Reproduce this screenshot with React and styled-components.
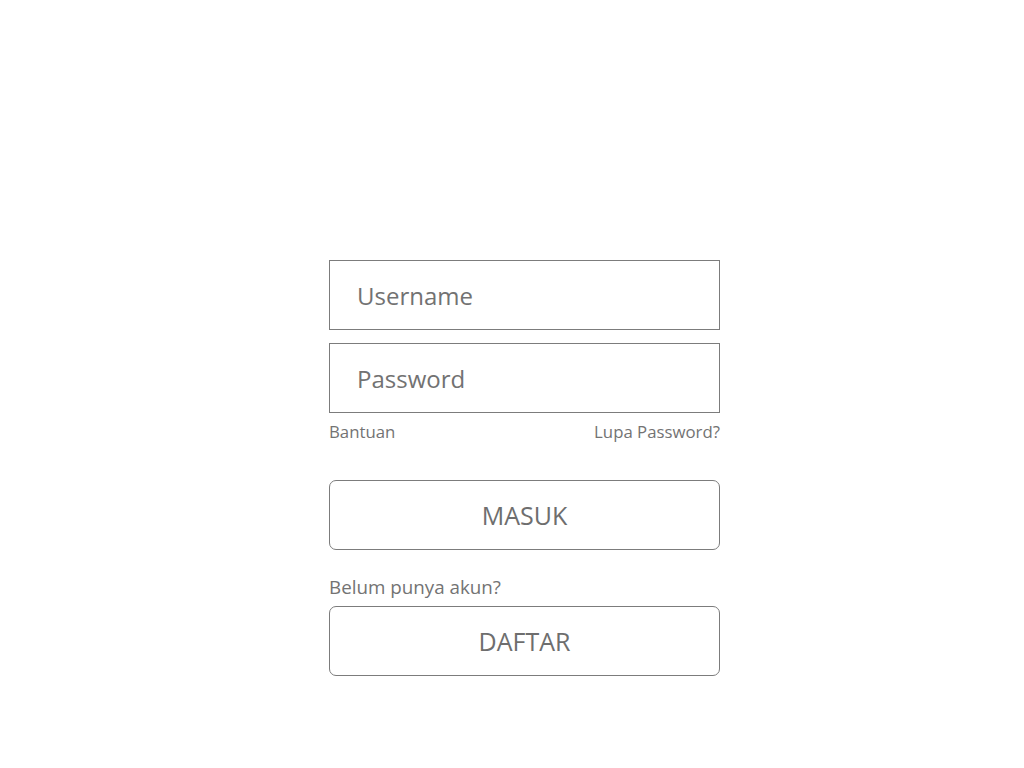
import React from "react";
import styled, { createGlobalStyle } from "styled-components";

const GlobalStyle = createGlobalStyle`
  html, body {
    margin: 0;
    padding: 0;
    background: #ffffff;
    font-family: "Open Sans", "Noto Sans", sans-serif;
  }
`;

const Wrapper = styled.div`
  width: 100vw;
  height: 100vh;
  display: flex;
  overflow: hidden;
`;

const Form = styled.form`
  width: 391px;
  margin: 260px 0 0 329px;
  display: flex;
  flex-direction: column;
`;

const Field = styled.input`
  box-sizing: border-box;
  width: 100%;
  height: 70px;
  margin-top: ${(p) => p.$top || 0}px;
  padding: 0 27px;
  border: 1px solid #7c7c7c;
  border-radius: 0;
  outline: none;
  font-family: inherit;
  font-size: 24px;
  color: #6e6e6e;

  &::placeholder {
    color: #727272;
  }
`;

const LinkRow = styled.div`
  display: flex;
  justify-content: space-between;
  margin-top: 8px;
  line-height: 22px;
  font-size: 16.8px;
  color: #737373;
`;

const Link = styled.a`
  color: inherit;
  text-decoration: none;
  cursor: pointer;
`;

const Button = styled.button`
  box-sizing: border-box;
  width: 100%;
  height: 70px;
  margin-top: ${(p) => p.$top}px;
  border: 1px solid #7c7c7c;
  border-radius: 7px;
  background: #ffffff;
  font-family: inherit;
  font-size: 25px;
  color: #6e6e6e;
  cursor: pointer;
`;

const Label = styled.div`
  margin-top: 25px;
  line-height: 24px;
  font-size: 18.8px;
  color: #737373;
`;

const App = () => {
  return (
    <Wrapper>
      <GlobalStyle />
      <Form onSubmit={(e) => e.preventDefault()}>
        <Field type="text" placeholder="Username" />
        <Field type="password" placeholder="Password" $top={13} />
        <LinkRow>
          <Link>Bantuan</Link>
          <Link>Lupa Password?</Link>
        </LinkRow>
        <Button type="submit" $top={37}>MASUK</Button>
        <Label>Belum punya akun?</Label>
        <Button type="button" $top={7}>DAFTAR</Button>
      </Form>
    </Wrapper>
  );
};

export default App;
